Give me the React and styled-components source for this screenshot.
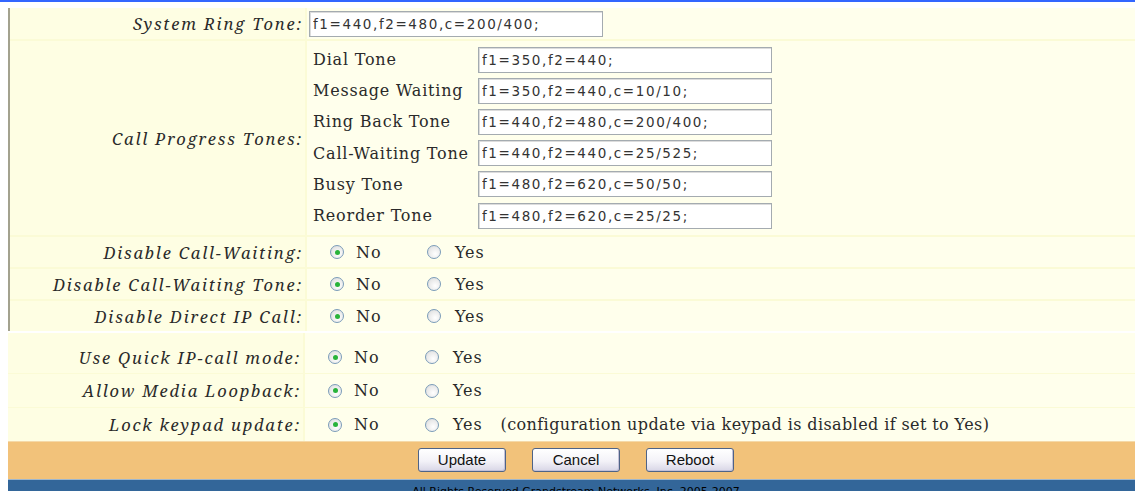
import styled, { createGlobalStyle } from "styled-components";

const GlobalStyle = createGlobalStyle`
    html, body {
        margin: 0;
        background: #fff;
        overflow: hidden;
    }
`;

const serif = `"DejaVu Serif", "Liberation Serif", serif`;

const TopBar = styled.div`
    height: 2px;
    background: #3366ff;
`;

const Page = styled.div`
    width: 1136px;
    padding: 6px 0 0 8px;
    font-family: ${serif};
    color: #2a2a2a;
`;

const ConfigTable = styled.div`
    display: grid;
    grid-template-columns: 295px 1fr;
    grid-template-rows: ${({ $rows }) => $rows};
    gap: ${({ $gap }) => $gap}px 2px;
    margin-top: ${({ $offset }) => $offset || 0}px;
    background: #fbfbd6;
    border-left: ${({ $bordered }) => ($bordered ? "2px solid #a3a28e" : "none")};
`;

const Label = styled.div`
    background: #fefee3;
    display: flex;
    align-items: center;
    justify-content: flex-end;
    padding: ${({ $pad }) => $pad || 0}px 2px 0 0;
    font-family: "Noto Serif", ${serif};
    font-style: italic;
    font-size: 16.5px;
    letter-spacing: 1.8px;
    white-space: nowrap;
`;

const Value = styled.div`
    background: #ffffec;
    display: flex;
    align-items: center;
    padding: ${({ $pad }) => $pad || 0}px 0 0 2px;
    font-family: ${serif};
    font-size: 16px;
    white-space: nowrap;
`;

const TextInput = styled.input.attrs({ type: "text", readOnly: true })`
    box-sizing: border-box;
    width: 294px;
    height: 26px;
    margin: 0;
    padding: 0 3px;
    border: 1px solid #a4abb0;
    box-shadow: inset 1px 1px 0 #dcdcdc;
    background: #fff;
    font-family: "DejaVu Sans", "Liberation Sans", sans-serif;
    font-size: 13.5px;
    letter-spacing: 1.6px;
    color: #333;
    outline: none;
`;

const ToneTable = styled.div`
    align-self: stretch;
    display: grid;
    grid-template-columns: 165px 294px;
    grid-auto-rows: 31.2px;
    padding: 3px 0 0 4px;
`;

const ToneName = styled.div`
    display: flex;
    align-items: center;
    letter-spacing: 0.8px;
`;

const ToneField = styled.div`
    display: flex;
    align-items: center;
`;

const RadioGroup = styled.div`
    display: flex;
    align-items: center;
    padding-left: 21px;
    letter-spacing: 0.9px;
`;

const Option = styled.label`
    display: inline-flex;
    align-items: center;
    gap: ${({ $wide }) => ($wide ? 14 : 12)}px;
    width: ${({ $wide }) => ($wide ? "auto" : "97px")};
`;

const Radio = styled.span`
    box-sizing: border-box;
    width: 14px;
    height: 14px;
    border-radius: 50%;
    border: 1px solid #7b9cb9;
    background: radial-gradient(circle at 60% 65%, #ffffff 0%, #e9e9e9 60%, #cfd3d6 100%);
    display: inline-flex;
    align-items: center;
    justify-content: center;

    &::after {
        content: "";
        width: 5px;
        height: 5px;
        border-radius: 50%;
        background: ${({ $checked }) => ($checked ? "#29b33a" : "transparent")};
    }
`;

const Note = styled.span`
    margin-left: 18px;
    letter-spacing: 0.4px;
`;

const ButtonBar = styled.div`
    height: 38px;
    background: #f2c27a;
    display: flex;
    align-items: center;
    justify-content: center;
    gap: 26px;
    padding-bottom: 2px;
    box-sizing: border-box;
    border-top: 1px solid #f5d9a8;
`;

const Button = styled.button`
    height: 24px;
    min-width: 88px;
    padding: 0 14px;
    border: 1px solid #4e6387;
    border-radius: 3px;
    background: linear-gradient(#ffffff 0%, #f3f2f8 55%, #d8d6e6 100%);
    box-shadow: inset -1px -1px 0 #c3c1d8;
    font-family: "Liberation Sans", Arial, sans-serif;
    font-size: 15px;
    color: #111;
`;

const Footer = styled.div`
    height: 20px;
    background: #336699;
    border-top: 1px solid #9fb6cc;
    text-align: center;
    padding-top: 5px;
    font-family: "DejaVu Sans", "Liberation Sans", sans-serif;
    font-size: 11px;
    color: #000;
`;

const tones = [
    ["Dial Tone", "f1=350,f2=440;"],
    ["Message Waiting", "f1=350,f2=440,c=10/10;"],
    ["Ring Back Tone", "f1=440,f2=480,c=200/400;"],
    ["Call-Waiting Tone", "f1=440,f2=440,c=25/525;"],
    ["Busy Tone", "f1=480,f2=620,c=50/50;"],
    ["Reorder Tone", "f1=480,f2=620,c=25/25;"],
];

function YesNo({ note }) {
    return (
        <RadioGroup>
            <Option>
                <Radio $checked />
                No
            </Option>
            <Option $wide>
                <Radio />
                Yes
            </Option>
            {note && <Note>{note}</Note>}
        </RadioGroup>
    );
}

export default function App() {
    return (
        <>
            <GlobalStyle />
            <TopBar />
            <Page>
                <ConfigTable $bordered $rows="31px 194px 30px 30px 30px" $gap={2}>
                    <Label>System Ring Tone:</Label>
                    <Value>
                        <TextInput defaultValue="f1=440,f2=480,c=200/400;" />
                    </Value>

                    <Label>Call Progress Tones:</Label>
                    <Value>
                        <ToneTable>
                            {tones.map(([name, value]) => [
                                <ToneName key={name}>{name}</ToneName>,
                                <ToneField key={name + "-v"}>
                                    <TextInput defaultValue={value} />
                                </ToneField>,
                            ])}
                        </ToneTable>
                    </Value>

                    <Label>Disable Call-Waiting:</Label>
                    <Value>
                        <YesNo />
                    </Value>
                    <Label>Disable Call-Waiting Tone:</Label>
                    <Value>
                        <YesNo />
                    </Value>
                    <Label>Disable Direct IP Call:</Label>
                    <Value>
                        <YesNo />
                    </Value>
                </ConfigTable>

                <ConfigTable $rows="40px 33px 33px" $gap={1} $offset={2}>
                    <Label $pad={8}>Use Quick IP-call mode:</Label>
                    <Value $pad={8}>
                        <YesNo />
                    </Value>
                    <Label>Allow Media Loopback:</Label>
                    <Value>
                        <YesNo />
                    </Value>
                    <Label>Lock keypad update:</Label>
                    <Value>
                        <YesNo note="(configuration update via keypad is disabled if set to Yes)" />
                    </Value>
                </ConfigTable>

                <ButtonBar>
                    <Button>Update</Button>
                    <Button>Cancel</Button>
                    <Button>Reboot</Button>
                </ButtonBar>
                <Footer>All Rights Reserved Grandstream Networks, Inc. 2005-2007</Footer>
            </Page>
        </>
    );
}
